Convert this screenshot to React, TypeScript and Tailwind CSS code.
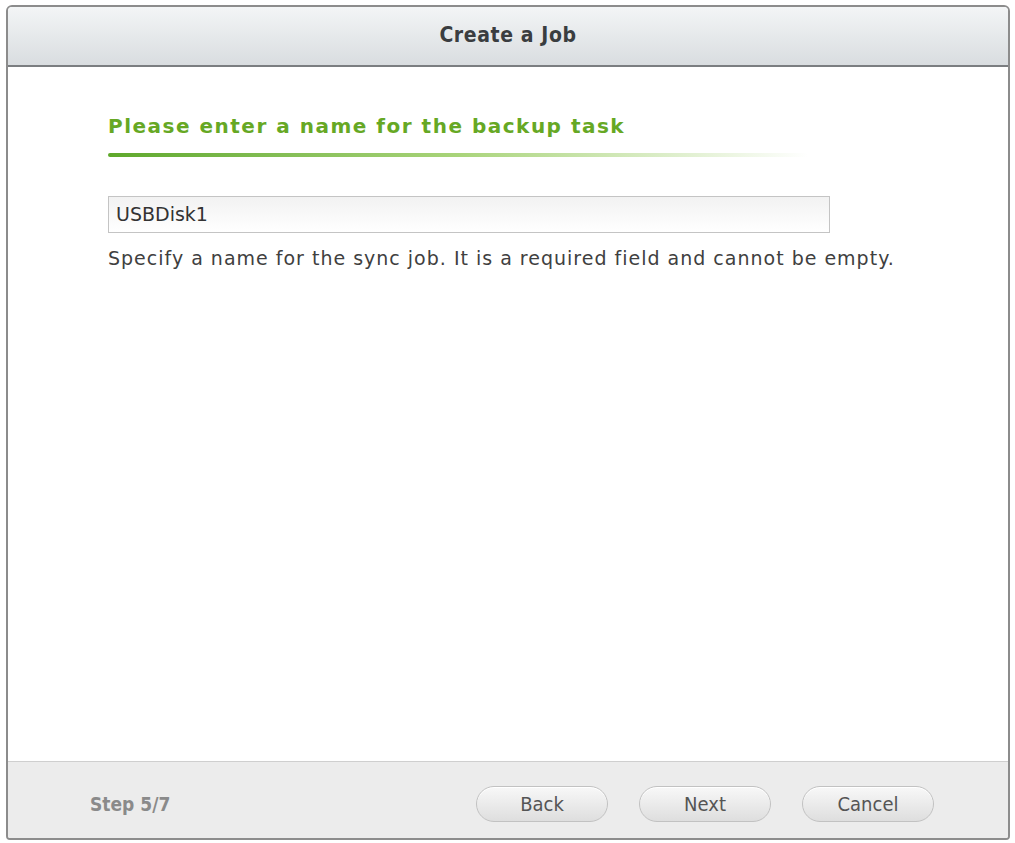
import React from "react";

export default function App() {
  return (
    <div className="w-[1015px] h-[843px] bg-white pt-[5px] pl-[6px]" style={{ fontFamily: '"DejaVu Sans", Verdana, sans-serif' }}>
      <div className="w-[1004px] h-[835px] flex flex-col border-2 border-[#8c8c8c] rounded-t-[6px] rounded-b-[4px] overflow-hidden bg-white">
        <div className="h-[60px] shrink-0 flex items-center justify-center bg-gradient-to-b from-[#f3f5f6] to-[#d9dde0] border-b-2 border-[#7b7e81]">
          <span className="text-[21px] font-bold text-[#3a3d40] tracking-[0.6px]" style={{ fontFamily: '"DejaVu Sans Condensed", "DejaVu Sans", sans-serif' }}>
            Create a Job
          </span>
        </div>
        <div className="flex-1 pl-[100px] pt-[46px]">
          <div className="text-[20px] font-bold text-[#66a824] leading-[26px] tracking-[1.5px]">
            Please enter a name for the backup task
          </div>
          <div className="mt-[14px] h-[4px] w-[700px] bg-gradient-to-r from-[#5ea82a] via-[#a9d47a] to-transparent rounded-full" />
          <div className="mt-[39px] w-[722px] h-[37px] border border-[#c4c4c4] bg-gradient-to-b from-[#f2f2f2] to-white flex items-center pl-[7px] text-[19px] text-[#333]">
            USBDisk1
          </div>
          <div className="mt-[13px] text-[19px] text-[#404040] leading-[24px] tracking-[1px]">
            Specify a name for the sync job. It is a required field and cannot be empty.
          </div>
        </div>
        <div className="h-[77px] shrink-0 bg-[#ececec] border-t border-[#cfcfcf] flex items-center pl-[82px] pt-[8px]" style={{ fontFamily: '"DejaVu Sans Condensed", "DejaVu Sans", sans-serif' }}>
          <span className="text-[19px] font-semibold text-[#8a8a8a]">Step 5/7</span>
          <div className="ml-auto mr-[74px] flex gap-[31px]">
            {["Back", "Next", "Cancel"].map((b) => (
              <div key={b} className="w-[132px] h-[36px] rounded-full border border-[#c2c2c2] bg-gradient-to-b from-[#f8f8f8] to-[#dedede] shadow-[inset_0_1px_0_#fff] flex items-center justify-center text-[20px] text-[#555]">
                {b}
              </div>
            ))}
          </div>
        </div>
      </div>
    </div>
  );
}
